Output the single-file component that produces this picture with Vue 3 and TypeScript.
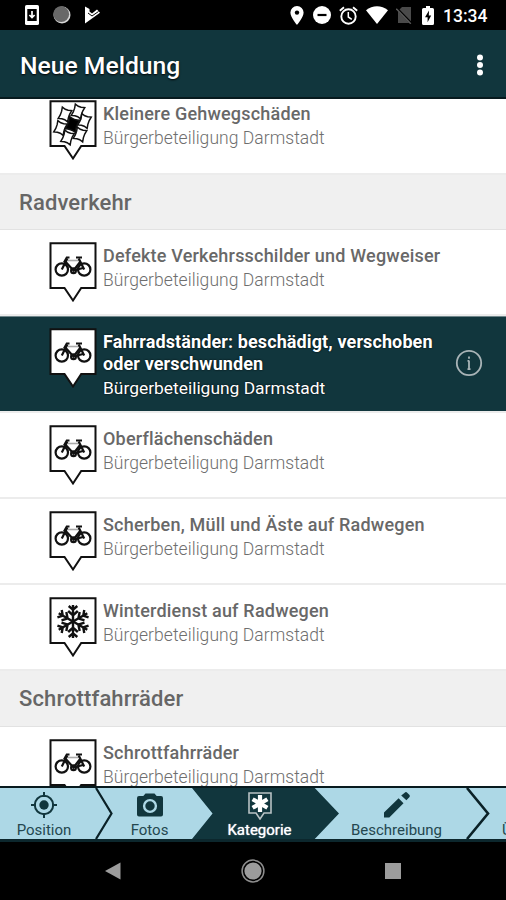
<script setup lang="ts">
type Glyph = 'paving' | 'bike' | 'snow'

interface Row {
  kind: 'item' | 'header'
  title: string
  glyph?: Glyph
  selected?: boolean
}

const provider = 'Bürgerbeteiligung Darmstadt'

const rows: Row[] = [
  { kind: 'item', title: 'Kleinere Gehwegschäden', glyph: 'paving' },
  { kind: 'header', title: 'Radverkehr' },
  { kind: 'item', title: 'Defekte Verkehrsschilder und Wegweiser', glyph: 'bike' },
  { kind: 'item', title: 'Fahrradständer: beschädigt, verschoben oder verschwunden', glyph: 'bike', selected: true },
  { kind: 'item', title: 'Oberflächenschäden', glyph: 'bike' },
  { kind: 'item', title: 'Scherben, Müll und Äste auf Radwegen', glyph: 'bike' },
  { kind: 'item', title: 'Winterdienst auf Radwegen', glyph: 'snow' },
  { kind: 'header', title: 'Schrottfahrräder' },
  { kind: 'item', title: 'Schrottfahrräder', glyph: 'bike' },
]

const arms = [0, 60, 120, 180, 240, 300]

// Offsets of the six paving stones around the missing one.
const stones = [
  [5.5, -13], [-7.5, -10], [12, -3.5],
  [-12, 3.5], [-5, 13], [7.5, 10],
]
</script>

<template>
  <div class="screen">
    <div class="status">
      <div class="status-left">
        <svg class="s-phone" width="14" height="20" viewBox="0 0 14 20">
          <rect width="14" height="20" rx="1.6" fill="#fff" />
          <rect x="2.3" y="4" width="9.4" height="12" fill="#000" />
          <path d="M7 6v6M4.4 10 7 12.5l2.6-2.5" fill="none" stroke="#fff" stroke-width="1.7" />
        </svg>
        <svg class="s-ball" width="18" height="18" viewBox="0 0 18 18">
          <circle cx="9" cy="9" r="8.5" fill="#d8d8d8" />
          <circle cx="8.2" cy="8.2" r="7.9" fill="#686868" />
        </svg>
        <svg class="s-play" width="17" height="18" viewBox="0 0 17 18">
          <path d="M1 .5 5.500 3 5.500 5.500 8 7.500 13 3.500l3 3.200L1 17.500Z" fill="#fff" />
          <path d="m4 7 4 3 6.500-4.500" fill="none" stroke="#000" stroke-width="1" />
        </svg>
      </div>
      <div class="status-right">
        <svg width="14" height="19" viewBox="0 0 14 19">
          <path d="M7 0a6.6 6.6 0 0 0-6.6 6.6C.4 11.5 7 19 7 19s6.600-7.500 6.600-12.400A6.600 6.600 0 0 0 7 0Z" fill="#fff" />
          <circle cx="7" cy="6.6" r="2.2" fill="#000" />
        </svg>
        <svg class="s-dnd" width="18" height="18" viewBox="0 0 18 18">
          <circle cx="9" cy="9" r="9" fill="#fff" />
          <path d="M4.500 9h9" stroke="#000" stroke-width="2.2" />
        </svg>
        <svg class="s-alarm" width="19" height="19" viewBox="0 0 19 19">
          <circle cx="9.5" cy="10.5" r="7.2" fill="none" stroke="#fff" stroke-width="1.9" />
          <path d="M.8 4.800 5 1.300M18.200 4.800 14 1.300" stroke="#fff" stroke-width="1.9" />
          <path d="M9.300 6v5l3.500 2.300" fill="none" stroke="#fff" stroke-width="1.5" />
        </svg>
        <svg class="s-wifi" width="22" height="18" viewBox="0 0 22 18">
          <path d="M0 4.200C6.500-1 15.500-1 22 4.200L11 18Z" fill="#fff" />
        </svg>
        <svg class="s-sim" width="16" height="18" viewBox="0 0 16 18">
          <path d="M6 1h9v16H2V5Z" fill="#4a4a4a" />
          <path d="M0 1.500 15.500 17.500" stroke="#000" stroke-width="2.4" />
          <path d="M.3 2.800 14.800 17.800" stroke="#5a5a5a" stroke-width="1.4" />
        </svg>
        <svg class="s-batt" width="12" height="19" viewBox="0 0 12 19">
          <path d="M4 0h4v2h2.500Q12 2 12 3.500v14Q12 19 10.500 19h-9Q0 19 0 17.500v-14Q0 2 1.500 2H4Z" fill="#fff" />
          <path d="M7 4.500 3 11.200h2.600v5L9.200 9.400H6.800Z" fill="#000" />
        </svg>
        <span class="clock">13:34</span>
      </div>
    </div>

    <header class="appbar">
      <h1>Neue Meldung</h1>
      <svg width="10" height="24" viewBox="0 0 10 24">
        <circle cx="5" cy="4.5" r="3" />
        <circle cx="5" cy="12" r="3" />
        <circle cx="5" cy="19.5" r="3" />
      </svg>
    </header>

    <main class="viewport">
      <div class="list">
        <template v-for="(row, i) in rows" :key="i">
          <h2 v-if="row.kind === 'header'" class="section">{{ row.title }}</h2>
          <div v-else class="item" :class="{ selected: row.selected }">
            <svg class="pin" width="48" height="62" viewBox="0 0 48 62">
              <path class="frame" d="M1.500 1.200H46.500V46H32.200L24 58.500 15.500 46H1.500Z" />
              <g v-if="row.glyph === 'bike'" class="bike">
                <path class="bar" d="M18.500 18.500h12" />
                <circle cx="12.800" cy="27.500" r="6.200" />
                <circle cx="35.200" cy="27.500" r="6.200" />
                <circle cx="24.500" cy="28.700" r="2.400" />
                <path d="M12.800 27.500 18.300 16.500M16.300 19.500 24.500 28.500 31.500 19.500M29.700 16.500 35.200 27.500M24.500 28.500 34 26" />
                <path d="M15 20.500 17.800 15.500h2.700M27 15.500h6" />
              </g>
              <g v-else-if="row.glyph === 'snow'" class="snow" transform="translate(24 24.5)">
                <path v-for="a in arms" :key="a" :transform="`rotate(${a})`" d="M0 0V-16.500M-4.300-15.500 0-11.800 4.300-15.500M-4.800-10.500 0-6.200 4.800-10.500" />
              </g>
              <g v-else class="paving" transform="translate(23.500 24.500)">
                <path class="hole" transform="rotate(20)" d="M-5.500-6.500Q0-4.500 5.500-6.500 3.500 0 5.500 6.500 0 4.500-5.500 6.500-3.500 0-5.500-6.500Z" />
                <path
                  v-for="([x, y], n) in stones"
                  :key="n"
                  :transform="`translate(${x} ${y}) rotate(20)`"
                  d="M-5-6-1.500-5 1.500-5 5-6 4.300-2 4.300 2 5 6 1.500 5-1.500 5-5 6-4.300 2-4.300-2Z"
                />
              </g>
            </svg>
            <div class="copy">
              <div class="title">{{ row.title }}</div>
              <div class="provider">{{ provider }}</div>
            </div>
            <svg v-if="row.selected" class="info" width="28" height="28" viewBox="0 0 28 28">
              <circle cx="14" cy="14" r="12.2" />
              <path d="M14 11.500v9M14 7.500v2.300M12.500 11.800h1.500M12.500 20.200h3" />
            </svg>
          </div>
        </template>
      </div>
    </main>

    <nav class="steps">
      <div class="step first">
        <svg width="26" height="26" viewBox="0 0 26 26">
          <circle cx="13" cy="13" r="9.2" fill="none" stroke="#11363d" stroke-width="2" />
          <circle cx="13" cy="13" r="4.7" fill="#11363d" />
          <path d="M13 0v5M13 21v5M0 13h5M21 13h5" stroke="#11363d" stroke-width="2" />
        </svg>
        <span>Position</span>
      </div>
      <svg class="chevron" width="18" height="51" viewBox="0 0 18 51">
        <path d="M1 0 16.500 25.500 1 51" fill="none" stroke="#0a2127" stroke-width="2.2" />
      </svg>
      <div class="step photos">
        <svg width="26" height="26" viewBox="0 0 26 26">
          <path d="M8.500 1.500h9l2.200 2.500H24Q26 4 26 6v16.500Q26 24.500 24 24.500H2Q0 24.500 0 22.500V6Q0 4 2 4h4.300Z" fill="#11363d" />
          <circle cx="13" cy="14" r="5.9" fill="none" stroke="#add8e6" stroke-width="2.4" />
        </svg>
        <span>Fotos</span>
      </div>
      <div class="step active">
        <svg width="26" height="28" viewBox="0 0 26 28">
          <path d="M2 1h22v20h-7l-4 6-4-6H2Z" fill="#11363d" stroke="#b8c2c4" stroke-width="1.6" />
          <path d="M13 3v17M5.600 7.200l14.800 8.600M5.600 15.800l14.800-8.600" stroke="#fff" stroke-width="4.2" />
        </svg>
        <span>Kategorie</span>
      </div>
      <div class="step describe">
        <svg width="26" height="26" viewBox="0 0 26 26">
          <path d="M0 20.600V25.500H5.300L19.500 11.200 14.600 6.200ZM16.200 4.600l5 5M18.800 2.200 21.300.3Q22.300-.2 23.200.7L25.300 2.800Q26.300 4 25.300 5.300L22.400 8.200 17.200 3.400Z" fill="#11363d" />
        </svg>
        <span>Beschreibung</span>
      </div>
      <svg class="chevron" width="24" height="51" viewBox="0 0 24 51">
        <path d="M1 0 22 25.500 1 51" fill="none" stroke="#0a2127" stroke-width="2.6" />
      </svg>
      <div class="step last"><span>Übersicht</span></div>
    </nav>

    <div class="sysnav">
      <svg width="16" height="18" viewBox="0 0 16 18"><path d="M0 9 15.500.5v17Z" fill="#9c9c9c" /></svg>
      <svg width="24" height="24" viewBox="0 0 24 24">
        <circle cx="12" cy="12" r="10.9" fill="none" stroke="#8d8d8d" stroke-width="1.5" />
        <circle cx="12" cy="12" r="8.6" fill="#9c9c9c" />
      </svg>
      <svg width="16" height="16" viewBox="0 0 16 16"><rect width="16" height="16" fill="#9c9c9c" /></svg>
    </div>
  </div>
</template>

<style>
body {
  margin: 0;
}
</style>

<style scoped>
.screen {
  display: flex;
  flex-direction: column;
  width: 506px;
  height: 900px;
  overflow: hidden;
  background: #000;
  font-family: Roboto, "Liberation Sans", sans-serif;
}
svg {
  display: block;
  flex: none;
}
.status {
  display: flex;
  justify-content: space-between;
  height: 30px;
  padding: 0 18px 0 25px;
  box-sizing: border-box;
}
.status-left,
.status-right {
  display: flex;
  align-items: center;
}
.s-ball { margin-left: 14px; }
.s-play { margin-left: 13px; }
.s-dnd { margin-left: 9px; }
.s-alarm { margin-left: 8px; }
.s-wifi { margin-left: 8px; }
.s-sim { margin-left: 8px; }
.s-batt { margin-left: 10px; }
.clock {
  width: 45px;
  margin-left: 9px;
  margin-top: 2px;
  color: #fff;
  font-size: 17.5px;
  font-weight: 500;
  line-height: 20px;
  white-space: nowrap;
}
.appbar {
  display: flex;
  align-items: center;
  justify-content: space-between;
  flex: none;
  height: 69px;
  padding: 3px 21px 0 20px;
  box-sizing: border-box;
  border-bottom: 2px solid #071a1e;
  background: #11363d;
}
.appbar h1 {
  margin: 2px 0 0;
  color: #fff;
  font-size: 24.7px;
  font-weight: 500;
  line-height: 30px;
  text-shadow: 0 1px 2px #000;
}
.appbar svg {
  fill: #fff;
}
.viewport {
  flex: none;
  height: 687px;
  overflow: hidden;
  background: #fff;
}
.list {
  margin-top: -10.6px;
}
.section {
  height: 55.25px;
  margin: 0;
  padding: 2px 0 0 19px;
  box-sizing: border-box;
  border-bottom: 1px solid #e2e2e2;
  background: #f0f0f0;
  color: #666;
  font-size: 22px;
  font-weight: 500;
  line-height: 52px;
  letter-spacing: 0.12px;
}
.item {
  display: flex;
  height: 86.25px;
  padding: 12px 23px 0 49px;
  box-sizing: border-box;
  border-bottom: 2px solid #ececec;
}
.item.selected {
  height: 96.5px;
  border-top: 1px solid #70868b;
  padding-top: 11px;
  background: #11363d;
  background-clip: padding-box;
}
.frame {
  fill: #fff;
  stroke: #111;
  stroke-width: 2;
}
.bike {
  fill: none;
  stroke: #111;
  stroke-width: 2.2;
}
.bike .bar {
  stroke: #aaa;
  stroke-width: 1.6;
}
.snow {
  fill: none;
  stroke: #111;
  stroke-width: 2.4;
}
.paving {
  fill: none;
  stroke: #111;
  stroke-width: 1.5;
}
.paving .hole {
  fill: #000;
}
.copy {
  flex: 1;
  margin-left: 6px;
}
.title {
  padding-top: 3px;
  color: #686868;
  font-size: 18px;
  font-weight: 500;
  line-height: 22px;
  letter-spacing: 0.2px;
}
.provider {
  margin-top: 2px;
  color: #6e6e6e;
  font-size: 17.5px;
  font-weight: 300;
  line-height: 22px;
  letter-spacing: 0.05px;
}
.selected .title {
  color: #fff;
  font-weight: 700;
  letter-spacing: 0.11px;
  text-shadow: 0 0 2px #000;
}
.selected .provider {
  color: #fff;
  font-size: 17.4px;
  font-weight: 400;
  letter-spacing: 0;
  text-shadow: 0 0 2px #000;
}
.info {
  margin-top: 21px;
  fill: none;
  stroke: #a9b4b7;
  stroke-width: 1.8;
}
.steps {
  display: flex;
  flex: none;
  height: 56px;
  box-sizing: border-box;
  border-top: 2px solid #071a1e;
  border-bottom: 3px solid #0c272d;
  background: #add8e6;
  overflow: hidden;
}
.step {
  display: flex;
  flex: none;
  flex-direction: column;
  align-items: center;
  padding-top: 4px;
  box-sizing: border-box;
  color: #24474f;
  font-size: 15px;
  line-height: 18px;
  white-space: nowrap;
}
.step span {
  margin-top: auto;
}
.first { width: 88px; }
.chevron { margin-left: 7px; }
.photos { width: 73px; }
.active {
  width: 147px;
  margin-left: 6px;
  padding-right: 12px;
  background: #11363d;
  color: #fff;
  clip-path: polygon(0 0, 83.5% 0, 100% 50%, 83.5% 100%, 0 100%, 14% 50%);
  text-shadow: 0 0 1px #fff;
}
.describe {
  width: 105px;
  margin-left: 5px;
}
.describe + .chevron { margin-left: 17px; }
.last {
  width: 80px;
  margin-left: 12px;
  align-items: flex-start;
}
.sysnav {
  display: flex;
  align-items: center;
  justify-content: space-between;
  flex: 1;
  padding: 0 105px;
}
</style>
